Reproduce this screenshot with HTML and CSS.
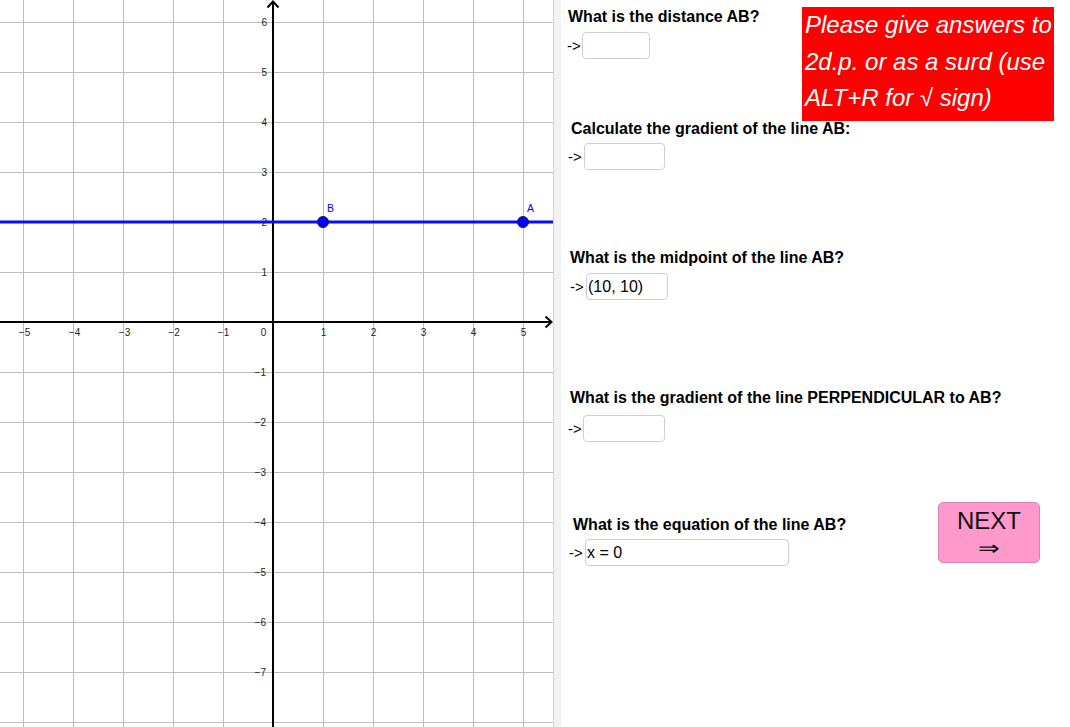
FILE: index.html
```html
<!DOCTYPE html>
<html>
<head>
<meta charset="utf-8">
<link rel="stylesheet" href="styles.css">
</head>
<body>
<div class="app">
  <div class="graph">
    <svg width="553" height="727" viewBox="0 0 553 727" xmlns="http://www.w3.org/2000/svg">
      <g class="grid">
        <line x1="23.5" y1="0" x2="23.5" y2="727"/>
        <line x1="73.5" y1="0" x2="73.5" y2="727"/>
        <line x1="123.5" y1="0" x2="123.5" y2="727"/>
        <line x1="173.5" y1="0" x2="173.5" y2="727"/>
        <line x1="223.5" y1="0" x2="223.5" y2="727"/>
        <line x1="323.5" y1="0" x2="323.5" y2="727"/>
        <line x1="373.5" y1="0" x2="373.5" y2="727"/>
        <line x1="423.5" y1="0" x2="423.5" y2="727"/>
        <line x1="473.5" y1="0" x2="473.5" y2="727"/>
        <line x1="523.5" y1="0" x2="523.5" y2="727"/>
        <line x1="0" y1="22.5" x2="553" y2="22.5"/>
        <line x1="0" y1="72.5" x2="553" y2="72.5"/>
        <line x1="0" y1="122.5" x2="553" y2="122.5"/>
        <line x1="0" y1="172.5" x2="553" y2="172.5"/>
        <line x1="0" y1="222.5" x2="553" y2="222.5"/>
        <line x1="0" y1="272.5" x2="553" y2="272.5"/>
        <line x1="0" y1="372.5" x2="553" y2="372.5"/>
        <line x1="0" y1="422.5" x2="553" y2="422.5"/>
        <line x1="0" y1="472.5" x2="553" y2="472.5"/>
        <line x1="0" y1="522.5" x2="553" y2="522.5"/>
        <line x1="0" y1="572.5" x2="553" y2="572.5"/>
        <line x1="0" y1="622.5" x2="553" y2="622.5"/>
        <line x1="0" y1="672.5" x2="553" y2="672.5"/>
        <line x1="0" y1="722.5" x2="553" y2="722.5"/>
      </g>
      <g class="ticks xt">
        <text x="24.5" y="336">−5</text>
        <text x="74.5" y="336">−4</text>
        <text x="124.5" y="336">−3</text>
        <text x="174" y="336">−2</text>
        <text x="223.5" y="336">−1</text>
        <text x="263.5" y="336">0</text>
        <text x="323.5" y="336">1</text>
        <text x="373.5" y="336">2</text>
        <text x="423.5" y="336">3</text>
        <text x="473.5" y="336">4</text>
        <text x="523.5" y="336">5</text>
      </g>
      <g class="ticks yt">
        <text x="267" y="25.5">6</text>
        <text x="267" y="75.5">5</text>
        <text x="267" y="125.5">4</text>
        <text x="267" y="175.5">3</text>
        <text x="267" y="225.5">2</text>
        <text x="267" y="275.5">1</text>
        <text x="266" y="375.5">−1</text>
        <text x="266" y="425.5">−2</text>
        <text x="266" y="475.5">−3</text>
        <text x="266" y="525.5">−4</text>
        <text x="266" y="575.5">−5</text>
        <text x="266" y="625.5">−6</text>
        <text x="266" y="675.5">−7</text>
      </g>
      <g class="axes">
        <line x1="0" y1="322" x2="551" y2="322"/>
        <line x1="273" y1="2" x2="273" y2="727"/>
        <polyline points="545.5,316.5 551.5,322 545.5,327.5"/>
        <polyline points="267.5,7.5 273,1.5 278.5,7.5"/>
      </g>
      <line class="abline" x1="0" y1="222" x2="553" y2="222"/>
      <circle class="pt" cx="323" cy="222" r="5.5"/>
      <circle class="pt" cx="523" cy="222" r="5.5"/>
      <text class="plabel" x="327" y="212">B</text>
      <text class="plabel" x="527" y="212">A</text>
    </svg>
  </div>
  <div class="divider"></div>
  <div class="panel">
    <div class="top">
      <div class="q q1">
        <div class="title">What is the distance AB?</div>
        <div class="row"><span class="arrow">-&gt;</span><div class="answer w68"></div></div>
      </div>
      <div class="note">Please give answers to<br>2d.p. or as a surd (use<br>ALT+R for √ sign)</div>
    </div>
    <div class="q q2">
      <div class="title">Calculate the gradient of the line AB:</div>
      <div class="row"><span class="arrow">-&gt;</span><div class="answer w81"></div></div>
    </div>
    <div class="q q3">
      <div class="title">What is the midpoint of the line AB?</div>
      <div class="row"><span class="arrow">-&gt;</span><div class="answer w82">(10, 10)</div></div>
    </div>
    <div class="q q4">
      <div class="title">What is the gradient of the line PERPENDICULAR to AB?</div>
      <div class="row"><span class="arrow">-&gt;</span><div class="answer w82"></div></div>
    </div>
    <div class="bottom">
      <div class="q q5">
        <div class="title">What is the equation of the line AB?</div>
        <div class="row"><span class="arrow">-&gt;</span><div class="answer w204">x = 0</div></div>
      </div>
      <div class="next">
        <span class="next-label">NEXT</span>
        <span class="next-arrow">⇒</span>
      </div>
    </div>
  </div>
</div>
</body>
</html>
```

FILE: styles.css
```css
html, body {
  margin: 0;
  padding: 0;
  background: #ffffff;
  overflow: hidden;
}

body {
  font-family: "Liberation Sans", Arial, sans-serif;
  color: #000;
}

.app {
  display: flex;
  width: 1070px;
  height: 727px;
}

.graph {
  width: 553px;
  height: 727px;
  flex: none;
}

.graph svg {
  display: block;
}

.grid line {
  stroke: #bdbdbd;
  stroke-width: 1;
}

.axes line,
.axes polyline {
  stroke: #000;
  stroke-width: 2;
  fill: none;
}

.ticks text {
  font-family: "Liberation Sans", Arial, sans-serif;
  font-size: 10px;
  fill: #222;
}

.xt text {
  text-anchor: middle;
}

.yt text {
  text-anchor: end;
}

.abline {
  stroke: #0a0aff;
  stroke-width: 3;
}

.pt {
  fill: #0000ff;
  stroke: #1a1a40;
  stroke-width: 1;
}

.plabel {
  font-family: "Liberation Sans", Arial, sans-serif;
  font-size: 10.5px;
  fill: #0000ff;
}

.divider {
  width: 7px;
  flex: none;
  background: #f2f2f2;
  border-left: 1px solid #d6d6d6;
}

.panel {
  flex: 1;
  display: flex;
  flex-direction: column;
}

.top {
  display: flex;
  justify-content: space-between;
  align-items: flex-start;
}

.title {
  font-size: 16px;
  font-weight: bold;
  line-height: 18px;
  white-space: nowrap;
}

.row {
  display: flex;
  align-items: center;
  height: 27px;
}

.arrow {
  display: inline-block;
  width: 14px;
  font-size: 15px;
  line-height: 17px;
}

.answer {
  box-sizing: border-box;
  height: 27px;
  border: 1px solid #cfcfcf;
  border-radius: 4px;
  background: #fff;
  font-size: 16px;
  line-height: 25px;
  padding: 0 1px;
  white-space: nowrap;
}

.w68 { width: 68px; }
.w81 { width: 81px; }
.w82 { width: 82px; }
.w204 { width: 204px; }

/* question 1 */
.q1 .title { margin-top: 8px; padding-left: 7px; }
.q1 .row { margin-top: 6px; padding-left: 6px; }
.q1 .answer { margin-left: 1px; }

/* question 2 */
.q2 { margin-top: -1px; }
.q2 .title { padding-left: 10px; }
.q2 .row { margin-top: 5px; padding-left: 7px; }
.q2 .answer { margin-left: 2px; }

/* question 3 */
.q3 { margin-top: 79px; }
.q3 .title { padding-left: 9px; }
.q3 .row { margin-top: 6px; padding-left: 9px; }
.q3 .answer { margin-left: 2px; }

/* question 4 */
.q4 { margin-top: 89px; }
.q4 .title { padding-left: 9px; }
.q4 .row { margin-top: 8px; padding-left: 7px; }
.q4 .answer { margin-left: 1px; }

/* question 5 + next */
.bottom {
  margin-top: 60px;
  display: flex;
  align-items: flex-start;
}

.q5 { margin-top: 14px; }
.q5 .title { padding-left: 12px; }
.q5 .row { margin-top: 5px; padding-left: 8px; }
.q5 .answer { margin-left: 2px; }

.note {
  margin-top: 7px;
  margin-right: 16px;
  width: 252px;
  height: 114px;
  box-sizing: border-box;
  padding: 0 2px 0 3px;
  background: #ff0000;
  color: #ffffff;
  font-style: italic;
  font-size: 24px;
  line-height: 36.5px;
  white-space: nowrap;
}

.next {
  margin-left: auto;
  margin-right: 30px;
  width: 102px;
  height: 61px;
  box-sizing: border-box;
  background: #ff99cc;
  border: 1px solid #e07fb0;
  border-radius: 5px;
  display: flex;
  flex-direction: column;
  align-items: center;
  color: #111;
}

.next-label {
  font-size: 24px;
  line-height: normal;
  margin-top: 4px;
}

.next-arrow {
  font-family: "DejaVu Sans", sans-serif;
  font-size: 20px;
  font-weight: 200;
  line-height: normal;
  margin-top: 1px;
  transform: scaleX(1.3);
}
```
